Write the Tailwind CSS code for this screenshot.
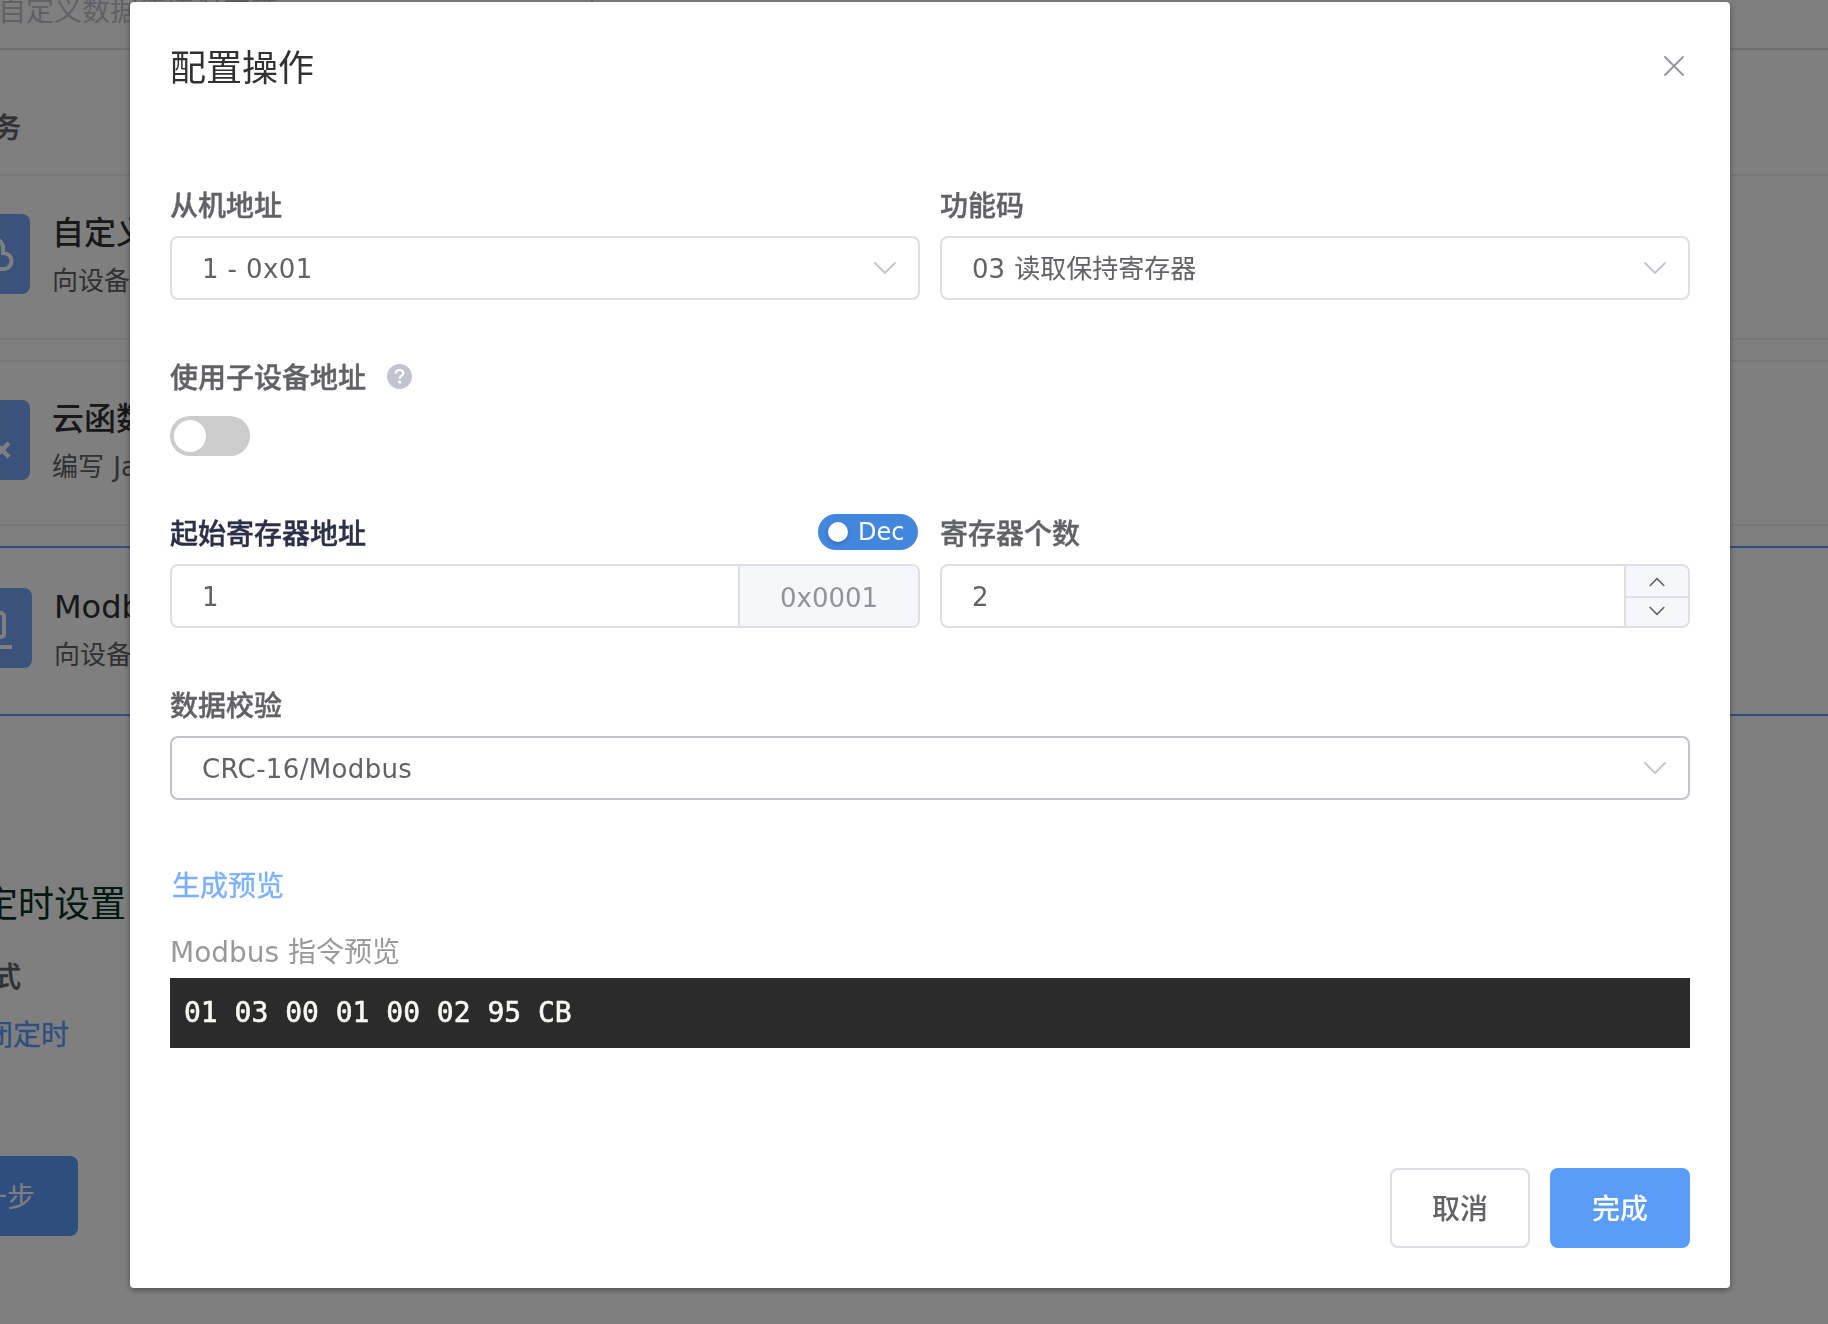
<!DOCTYPE html>
<html lang="zh-CN">
<head>
    <meta charset="UTF-8">
    <meta name="viewport" content="width=device-width, initial-scale=1.0">
    <title>配置操作</title>
    <script src="https://cdn.jsdelivr.net/npm/@tailwindcss/browser@4"></script>
</head>
<body class="h-screen overflow-hidden bg-white font-['DejaVu_Sans','Noto_Sans_CJK_SC',sans-serif] text-[28px] text-[#606266]">

    <!-- page behind the dialog -->
    <main class="relative h-screen overflow-hidden">
        <div class="flex h-[50px] items-end border-b-2 border-[#dcdfe6]">
            <p class="-ml-[2px] flex h-[60px] w-[595px] shrink-0 items-center whitespace-nowrap border-r-2 border-[#c0c4cc] pb-[12px] text-[#c0c4cc]">自定义数据清填温度等</p>
        </div>
        <div class="flex h-[124px] items-center pt-[34px]">
            <h3 class="-ml-[91px] font-medium leading-none [-webkit-text-stroke:0.4px]">执行任务</h3>
        </div>

        <section class="flex h-[166px] border-y-2 border-[#ebeef5]">
            <div class="-ml-[50px] mt-[38px] size-20 shrink-0 rounded-lg bg-[#76a6f8]">
                <svg class="size-20" viewBox="0 0 80 80" fill="none" stroke="#fff" stroke-width="4"><path d="M54 55H28a10 10 0 0 1-2-19a14 14 0 0 1 27-4v7a8 8 0 0 1 1 16z"/></svg>
            </div>
            <div class="ml-[22px] mt-[35px] whitespace-nowrap">
                <h4 class="text-[32px] font-medium leading-[44px] text-[#303133]">自定义数据下发</h4>
                <p class="mt-[8px] text-[26px] leading-[36px]">向设备下发自定义数据</p>
            </div>
        </section>
        <section class="mt-5 flex h-[166px] border-y-2 border-[#ebeef5]">
            <div class="-ml-[50px] mt-[38px] size-20 shrink-0 rounded-lg bg-[#76a6f8]">
                <svg class="size-20" viewBox="0 0 80 80" fill="none" stroke="#fff" stroke-width="4.5"><path d="M44 24h-6c-5 0-6 3-7 8l-4 24M24 37h16M45 43l14 14M59 43L45 57"/></svg>
            </div>
            <div class="ml-[22px] mt-[35px] whitespace-nowrap">
                <h4 class="text-[32px] font-medium leading-[44px] text-[#303133]">云函数</h4>
                <p class="mt-[8px] text-[26px] leading-[36px] [word-spacing:1px]">编写 JavaScript</p>
            </div>
        </section>
        <section class="mt-5 flex h-[170px] border-y-2 border-[#5a9cff]">
            <div class="-ml-[48px] mt-10 size-20 shrink-0 rounded-lg bg-[#76a6f8]">
                <svg class="size-20" viewBox="0 0 80 80" fill="none" stroke="#fff" stroke-width="4"><rect x="26" y="25" width="26" height="24" rx="3"/><path d="M20 59h40"/></svg>
            </div>
            <div class="ml-[22px] mt-[37px] whitespace-nowrap">
                <h4 class="text-[32px] leading-[44px] text-[#303133]">Modbus</h4>
                <p class="mt-[8px] text-[26px] leading-[36px]">向设备下发 Modbus 指令</p>
            </div>
        </section>

        <h3 class="-ml-[18px] mt-[169px] text-[36px] leading-[40px] text-[#003322]">定时设置</h3>
        <div class="mt-[35px] flex"><span class="-ml-[91px] font-medium leading-[36px] [-webkit-text-stroke:0.4px]">定时方式</span></div>
        <div class="mt-[22px] flex"><span class="-ml-[43px] leading-[36px] text-[#5a9cff] [-webkit-text-stroke:0.3px]">关闭定时</span></div>
        <div class="-ml-[92px] mt-[102px] flex h-20 w-[170px] items-center justify-center rounded-lg bg-[#5a9cff] pt-[4px] text-white">下一步</div>
    </main>

    <div class="fixed inset-0 bg-black/50">
        <div class="ml-[130px] mt-[2px] flex h-[1286px] w-[1600px] flex-col rounded-[4px] bg-white px-10 shadow-[0_2px_6px_rgba(0,0,0,0.4)]">
            <header class="flex h-[128px] items-center justify-between pr-[6px]">
                <h2 class="pt-[5px] text-[36px] leading-none text-[#303133]">配置操作</h2>
                <svg class="size-5" viewBox="0 0 20 20" fill="none" stroke="#909399" stroke-width="1.8" stroke-linecap="round"><path d="M1 1l18 18M19 1L1 19"/></svg>
            </header>

            <div class="mt-[55px] grid grid-cols-2 gap-x-5">
                <div>
                    <label class="flex h-10 items-center pt-[3px] font-medium [-webkit-text-stroke:0.4px]">从机地址</label>
                    <div class="mt-[11px] flex h-16 items-center justify-between rounded-lg border-2 border-[#dcdfe6] pl-[30px] pr-[22px] text-[26px]">
                        <span class="pt-[2px] tracking-[0.4px]">1 - 0x01</span>
                        <svg class="h-3 w-[22px]" viewBox="0 0 22 12" fill="none" stroke="#c0c4cc" stroke-width="1.8" stroke-linecap="round"><path d="M1 1l10 10L21 1"/></svg>
                    </div>
                </div>
                <div>
                    <label class="flex h-10 items-center pt-[3px] font-medium [-webkit-text-stroke:0.4px]">功能码</label>
                    <div class="mt-[11px] flex h-16 items-center justify-between rounded-lg border-2 border-[#dcdfe6] pl-[30px] pr-[22px] text-[26px]">
                        <span class="pt-[2px] [word-spacing:1px]">03 读取保持寄存器</span>
                        <svg class="h-3 w-[22px]" viewBox="0 0 22 12" fill="none" stroke="#c0c4cc" stroke-width="1.8" stroke-linecap="round"><path d="M1 1l10 10L21 1"/></svg>
                    </div>
                </div>
            </div>

            <div class="mt-[57px]">
                <div class="flex h-10 items-center">
                    <label class="pt-[3px] font-medium [-webkit-text-stroke:0.4px]">使用子设备地址</label>
                    <svg class="mb-[2px] ml-[21px] size-[25px]" viewBox="0 0 25 25"><circle cx="12.5" cy="12.5" r="12.5" fill="#c0c4cc"/><path d="M8.8 9.6c0-2.2 1.6-3.6 3.8-3.6s3.8 1.3 3.8 3.2c0 2.4-3.7 2.7-3.7 5.2" fill="none" stroke="#fff" stroke-width="2.2"/><circle cx="12.6" cy="18" r="1.6" fill="#fff"/></svg>
                </div>
                <div class="mt-[19px] flex h-10 w-20 items-center rounded-full bg-[#ccc] px-1">
                    <span class="size-8 rounded-full bg-white"></span>
                </div>
            </div>

            <div class="mt-[57px] grid grid-cols-2 gap-x-5">
                <div>
                    <div class="flex h-10 items-center justify-between pr-[2px]">
                        <label class="pt-[3px] font-medium text-[#2b3048] [-webkit-text-stroke:0.4px]">起始寄存器地址</label>
                        <span class="mb-[2px] flex h-9 w-[100px] items-center rounded-full bg-[#4386de] pl-[10px] text-[24px] text-white">
                            <i class="mr-[10px] size-5 rounded-full bg-white shadow-[0_2px_4px_rgba(0,0,0,0.2)]"></i>Dec
                        </span>
                    </div>
                    <div class="mt-[11px] flex h-16 overflow-hidden rounded-lg border-2 border-[#dcdfe6] text-[26px]">
                        <div class="flex flex-1 items-center pl-[30px] pt-[2px]">1</div>
                        <div class="flex w-[180px] items-center border-l-2 border-[#dcdfe6] bg-[#f5f7fa] pl-10 pt-[4px] text-[#909399]">0x0001</div>
                    </div>
                </div>
                <div>
                    <label class="flex h-10 items-center pt-[3px] font-medium [-webkit-text-stroke:0.4px]">寄存器个数</label>
                    <div class="mt-[11px] flex h-16 overflow-hidden rounded-lg border-2 border-[#dcdfe6] text-[26px]">
                        <div class="flex flex-1 items-center pl-[30px] pt-[2px]">2</div>
                        <div class="flex w-16 flex-col border-l-2 border-[#dcdfe6] bg-[#f5f7fa]">
                            <span class="flex h-8 items-center justify-center border-b-2 border-[#dcdfe6] pt-[2px]">
                                <svg class="h-[10px] w-4" viewBox="0 0 16 10" fill="none" stroke="#606266" stroke-width="1.5"><path d="M.7 9L8 1.6L15.3 9"/></svg>
                            </span>
                            <span class="flex flex-1 items-center justify-center pb-[2px]">
                                <svg class="h-[10px] w-4" viewBox="0 0 16 10" fill="none" stroke="#606266" stroke-width="1.5"><path d="M.7 1L8 8.4L15.3 1"/></svg>
                            </span>
                        </div>
                    </div>
                </div>
            </div>

            <label class="mt-[57px] flex h-10 items-center pt-[3px] font-medium [-webkit-text-stroke:0.4px]">数据校验</label>
            <div class="mt-[11px] flex h-16 items-center justify-between rounded-lg border-2 border-[#c0c4cc] pl-[30px] pr-[22px] text-[26px]">
                <span class="pt-[2px] tracking-[0.35px]">CRC-16/Modbus</span>
                <svg class="h-3 w-[22px]" viewBox="0 0 22 12" fill="none" stroke="#c0c4cc" stroke-width="1.8" stroke-linecap="round"><path d="M1 1l10 10L21 1"/></svg>
            </div>

            <a class="ml-[2px] mt-[65px] flex h-10 items-center pt-[4px] text-[#7bb0ff] [-webkit-text-stroke:0.4px]">生成预览</a>
            <p class="mt-[26px] flex h-10 items-center pt-[3px] text-[#999]">Modbus 指令预览</p>
            <pre class="mt-[7px] flex h-[70px] items-center bg-[#2b2b2b] pl-[14px] font-['DejaVu_Sans_Mono',monospace] text-[28px] text-[#f8f8f2] [-webkit-text-stroke:0.6px]">01 03 00 01 00 02 95 CB</pre>

            <footer class="mt-[120px] flex justify-end gap-5">
                <button class="h-20 w-[140px] rounded-lg border-2 border-[#dcdfe6] pt-[4px] font-medium">取消</button>
                <button class="h-20 w-[140px] rounded-lg bg-[#5a9cf8] pt-[4px] font-medium text-white">完成</button>
            </footer>
        </div>
    </div>
</body>
</html>
